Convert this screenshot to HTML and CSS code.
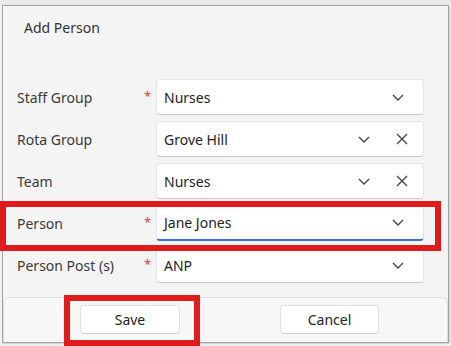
FILE: index.html
```html
<!DOCTYPE html>
<html>
<head>
<meta charset="utf-8">
<link rel="stylesheet" href="styles.css">
</head>
<body>
<div class="dialog">
  <div class="title">Add Person</div>
  <div class="form">
    <div class="row">
      <div class="label">Staff Group</div>
      <div class="star">*</div>
      <div class="field"><span class="value">Nurses</span><span class="icons"><svg class="chev" width="12" height="7" viewBox="0 0 12 7"><path d="M1 1 L6 6 L11 1" fill="none" stroke="#444" stroke-width="1.4"/></svg></span></div>
    </div>
    <div class="row">
      <div class="label">Rota Group</div>
      <div class="star"></div>
      <div class="field"><span class="value">Grove Hill</span><span class="icons with-x"><svg class="chev" width="12" height="7" viewBox="0 0 12 7"><path d="M1 1 L6 6 L11 1" fill="none" stroke="#444" stroke-width="1.4"/></svg><svg class="xic" width="12" height="12" viewBox="0 0 12 12"><path d="M1 1 L11 11 M11 1 L1 11" fill="none" stroke="#444" stroke-width="1.4"/></svg></span></div>
    </div>
    <div class="row">
      <div class="label">Team</div>
      <div class="star"></div>
      <div class="field"><span class="value">Nurses</span><span class="icons with-x"><svg class="chev" width="12" height="7" viewBox="0 0 12 7"><path d="M1 1 L6 6 L11 1" fill="none" stroke="#444" stroke-width="1.4"/></svg><svg class="xic" width="12" height="12" viewBox="0 0 12 12"><path d="M1 1 L11 11 M11 1 L1 11" fill="none" stroke="#444" stroke-width="1.4"/></svg></span></div>
    </div>
    <div class="row">
      <div class="label">Person</div>
      <div class="star">*</div>
      <div class="field focused"><span class="value">Jane Jones</span><span class="icons"><svg class="chev" width="12" height="7" viewBox="0 0 12 7"><path d="M1 1 L6 6 L11 1" fill="none" stroke="#444" stroke-width="1.4"/></svg></span></div>
    </div>
    <div class="row">
      <div class="label">Person Post (s)</div>
      <div class="star">*</div>
      <div class="field"><span class="value">ANP</span><span class="icons"><svg class="chev" width="12" height="7" viewBox="0 0 12 7"><path d="M1 1 L6 6 L11 1" fill="none" stroke="#444" stroke-width="1.4"/></svg></span></div>
    </div>
  </div>
  <div class="footer">
    <button class="btn">Save</button>
    <button class="btn">Cancel</button>
  </div>
</div>
<div class="highlight hl-person"></div>
<div class="highlight hl-save"></div>
</body>
</html>
```
FILE: styles.css
```css
html, body {
  margin: 0;
  padding: 0;
}
body {
  position: relative;
  width: 451px;
  height: 346px;
  background: #f2f2f2;
  font-family: "Noto Sans", "Open Sans", sans-serif;
  font-size: 14px;
  color: #333;
  overflow: hidden;
}
body::before {
  content: "";
  display: block;
  height: 5px;
  background: #e9e9e9;
}
.dialog {
  margin-left: 2px;
  width: 447px;
  height: 338px;
  box-sizing: border-box;
  border: 1px solid #a3a3a3;
  background: #f4f4f4;
  box-shadow: 1px 1px 1px rgba(0,0,0,0.12);
  display: flex;
  flex-direction: column;
}
.title {
  box-sizing: border-box;
  padding: 11px 0 0 21px;
  line-height: 22px;
  height: 34px;
  color: #333;
}
.form {
  margin-top: 39px;
  display: flex;
  flex-direction: column;
  gap: 6px;
}
.row {
  display: grid;
  grid-template-columns: 125px 14px 268px;
  align-items: center;
  height: 36px;
  padding-left: 14px;
}
.label {
  color: #3a3a3a;
}
.star {
  color: #e8413e;
  font-size: 13px;
  margin-top: -3px;
  padding-left: 2px;
}
.field {
  height: 36px;
  box-sizing: border-box;
  background: #fff;
  border: 1px solid #e4e4e4;
  border-bottom-color: #c9c9c9;
  border-radius: 4px;
  display: flex;
  align-items: center;
  justify-content: space-between;
  padding-left: 7px;
  color: #222;
}
.field.focused {
  border-bottom: 2px solid #3a6fd0;
}
.icons {
  display: flex;
  align-items: center;
  padding-right: 19px;
}
.icons.with-x {
  padding-right: 15px;
  gap: 26px;
}
.chev, .xic {
  display: block;
}
.footer {
  margin-top: 14px;
  flex: 1;
  border: 1px solid #dcdcdc;
  border-bottom: none;
  border-radius: 6px 6px 0 0;
  background: #f7f7f7;
  display: flex;
  align-items: flex-start;
  padding: 7px 0 0 76px;
  gap: 100px;
}
.btn {
  width: 100px;
  height: 29px;
  box-sizing: border-box;
  background: #fff;
  border: 1px solid #e2e2e2;
  border-bottom-color: #cfcfcf;
  border-radius: 4px;
  font-family: "Noto Sans", "Open Sans", sans-serif;
  font-size: 14px;
  color: #222;
  padding: 0;
}
.btn + .btn {
  width: 99px;
}
.highlight {
  position: absolute;
  border: 6px solid #e01b1b;
  box-sizing: border-box;
}
.hl-person {
  left: 0;
  top: 201px;
  width: 441px;
  height: 50px;
}
.hl-save {
  left: 64px;
  top: 295px;
  width: 136px;
  height: 51px;
}
```
